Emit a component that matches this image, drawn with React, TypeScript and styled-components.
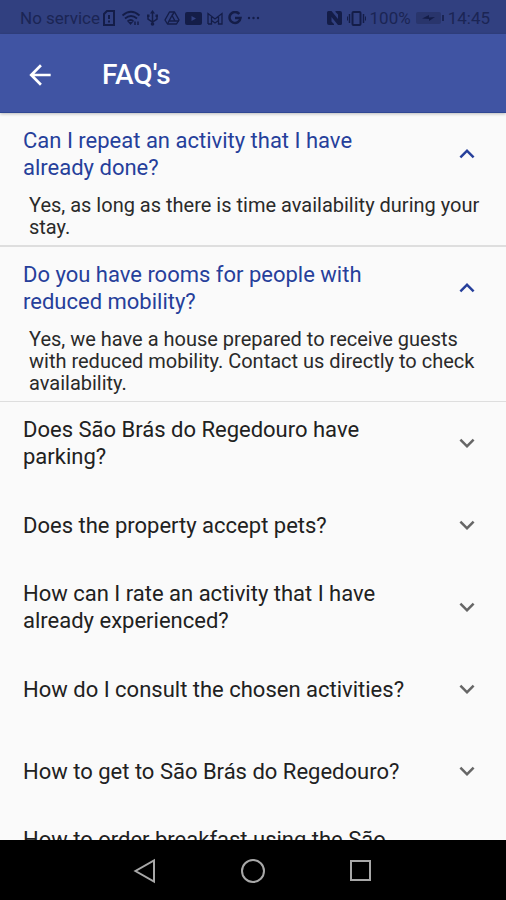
import React, { useState } from "react";
import styled, { createGlobalStyle } from "styled-components";

const GlobalStyle = createGlobalStyle`
  *, *::before, *::after { box-sizing: border-box; }
  body { margin: 0; font-family: Roboto, "Liberation Sans", sans-serif; background: #fafafa; }
  button { font: inherit; border: 0; padding: 0; background: none; cursor: pointer; }
  svg { display: block; flex: none; }
`;

const Screen = styled.div`
  display: flex;
  flex-direction: column;
  height: 100vh;
  overflow: hidden;
`;

const StatusBar = styled.div`
  display: flex;
  flex: none;
  align-items: center;
  justify-content: space-between;
  height: 34px;
  padding: 2px 16px 0 20px;
  background: #314080;
  color: #1b2554;
  font-size: 17px;
  line-height: 20px;

  svg {
    color: #141d48;
  }
`;

const StatusGroup = styled.div<{ $gap: number }>`
  display: flex;
  align-items: center;
  gap: ${({ $gap }) => $gap}px;
`;

const AppBar = styled.header`
  position: relative;
  display: flex;
  flex: none;
  align-items: center;
  gap: 46px;
  height: 79px;
  padding: 3px 24px 0;
  background: #4054a3;
  border-bottom: 1px solid #2f4793;
  box-shadow: 0 1px 3px rgba(0, 0, 0, 0.25);
  color: #fff;
`;

const BackButton = styled.button`
  color: inherit;
`;

const Title = styled.h1`
  margin: 0;
  font-size: 28px;
  font-weight: 500;
  line-height: 32px;
`;

const List = styled.main`
  flex: 1;
  min-height: 0;
  overflow: hidden;
`;

const Item = styled.section<{ $divider: number }>`
  border-bottom: ${({ $divider }) => $divider}px solid #dedede;
`;

const Heading = styled.h2`
  margin: 0;
  font-size: 22px;
  font-weight: 400;
  line-height: 27px;
`;

const Question = styled.button<{ $open: boolean }>`
  display: flex;
  align-items: center;
  justify-content: space-between;
  gap: 32px;
  width: 100%;
  height: ${({ $open }) => ($open ? 81 : 82)}px;
  padding: 0 24px 0 23px;
  text-align: left;
  color: ${({ $open }) => ($open ? "#263f9b" : "#212121")};

  svg {
    color: ${({ $open }) => ($open ? "#263f9b" : "#666")};
    transform: ${({ $open }) => ($open ? "rotate(180deg)" : "none")};
  }
`;

const Answer = styled.p`
  margin: 0;
  padding: 0 24px 7px 29px;
  color: #2a2a2a;
  font-size: 20px;
  line-height: 22px;
`;

const NavBar = styled.nav`
  display: flex;
  flex: none;
  align-items: center;
  justify-content: center;
  gap: 80px;
  height: 60px;
  padding-top: 2px;
  background: #000;
`;

const NavButton = styled.button`
  color: #a8a8a8;
`;

const ArrowBack = () => (
  <svg width="32" height="32" viewBox="0 0 24 24" fill="currentColor" aria-hidden="true">
    <path d="M20 11H7.830l5.590-5.590L12 4l-8 8 8 8 1.410-1.410L7.830 13H20v-2z" />
  </svg>
);

const Chevron = () => (
  <svg width="30" height="30" viewBox="0 0 24 24" fill="currentColor" aria-hidden="true">
    <path d="M16.590 8.590 12 13.170 7.410 8.590 6 10l6 6 6-6z" />
  </svg>
);

const SimAlert = () => (
  <svg width="14" height="18" viewBox="0 0 14 18" fill="none" stroke="currentColor" strokeWidth="2" aria-hidden="true">
    <path d="M5 2h7v14H2V5zM7 6v4M7 11.500v2" />
  </svg>
);

const Wifi = () => (
  <svg width="20" height="18" viewBox="0 0 20 18" fill="none" stroke="currentColor" strokeWidth="1.800" aria-hidden="true">
    <path d="M1.500 6.500Q10-1 18.500 6.500M4 9.500q6-5 12 0M6.500 12.500q3.500-3 6 0" />
    <path d="m7 13 2.500 3 2.500-3z" fill="currentColor" stroke="none" />
    <path d="M14 12.500V16M17 16v-3.500" strokeWidth="1.500" />
  </svg>
);

const Usb = () => (
  <svg width="13" height="18" viewBox="0 0 13 18" fill="none" stroke="currentColor" strokeWidth="1.500" aria-hidden="true">
    <path d="M6.500 3v11M2 7v3l4.500 3L11 10V7" />
    <path d="M6.500 1 9 4.500H4zM1 5.500h2.500V8H1zM9.500 5.500H12V8H9.500z" fill="currentColor" stroke="none" />
    <circle cx="6.500" cy="15" r="1.800" fill="currentColor" stroke="none" />
  </svg>
);

const Drive = () => (
  <svg width="16" height="16" viewBox="0 0 16 16" fill="none" stroke="currentColor" strokeWidth="1.400" strokeLinejoin="round" aria-hidden="true">
    <path d="M5.500 2h5L15 10l-2.500 4h-9L1 10z" />
    <path d="M8 5.500 11 11H5zM8 5.500 10.500 2M5 11l-1.500 3M11 11h4" />
  </svg>
);

const Video = () => (
  <svg width="17" height="13" viewBox="0 0 17 13" aria-hidden="true">
    <rect width="17" height="13" rx="2" fill="currentColor" />
    <path d="M6.500 4v5l4.500-2.500z" fill="#314080" />
  </svg>
);

const Mail = () => (
  <svg width="16" height="13" viewBox="0 0 16 13" fill="none" stroke="currentColor" strokeWidth="1.300" aria-hidden="true">
    <path d="M1 12V1.500L8 7l7-5.500V12h-3.500V5M1 12h3.500V5M4.500 8.500 8 11l3.500-2.500" />
  </svg>
);

const LetterG = () => (
  <svg width="14" height="14" viewBox="0 0 14 14" fill="none" stroke="currentColor" strokeWidth="2.500" aria-hidden="true">
    <path d="M11.300 3A5.500 5.500 0 1 0 12.500 7H7" />
  </svg>
);

const Dots = () => (
  <svg width="13" height="4" viewBox="0 0 13 4" fill="currentColor" aria-hidden="true">
    <circle cx="2" cy="2" r="1.200" />
    <circle cx="6.500" cy="2" r="1.200" />
    <circle cx="11" cy="2" r="1.200" />
  </svg>
);

const Nfc = () => (
  <svg width="16" height="16" viewBox="0 0 16 16" fill="currentColor" aria-hidden="true">
    <path d="M0 2.500Q0 1 1.500 1h3L11 9V4.500L8.500 2V1H13q2 0 2 2v10.500q0 1.500-1.500 1.500h-2.500L4.500 7v4.500L7 14v1H2q-2 0-2-2z" />
  </svg>
);

const Vibrate = () => (
  <svg width="19" height="17" viewBox="0 0 19 17" fill="none" stroke="currentColor" strokeWidth="2" aria-hidden="true">
    <rect x="5.500" y="2" width="8" height="13" rx="1" />
    <path d="M2.500 4v9M16.500 4v9" strokeWidth="1.500" />
    <path d="M.5 6.500v4M18.500 6.500v4" strokeWidth="1" />
  </svg>
);

const Battery = () => (
  <svg width="29" height="14" viewBox="0 0 29 14" aria-hidden="true">
    <rect x="1" y="1" width="25" height="12" rx="2" fill="#29356c" />
    <path d="M7 7.500 14 4v2.500l6-.5-6 4V8z" fill="#141d48" />
    <rect x="27" y="4" width="2" height="6" fill="#1b2554" />
  </svg>
);

type Faq = { question: string; answer: string; open?: boolean; divider?: number };

const faqs: Faq[] = [
  {
    question: "Can I repeat an activity that I have already done?",
    answer: "Yes, as long as there is time availability during your stay.",
    open: true,
    divider: 2,
  },
  {
    question: "Do you have rooms for people with reduced mobility?",
    answer:
      "Yes, we have a house prepared to receive guests with reduced mobility. Contact us directly to check availability.",
    open: true,
    divider: 1,
  },
  { question: "Does São Brás do Regedouro have parking?", answer: "" },
  { question: "Does the property accept pets?", answer: "" },
  { question: "How can I rate an activity that I have already experienced?", answer: "" },
  { question: "How do I consult the chosen activities?", answer: "" },
  { question: "How to get to São Brás do Regedouro?", answer: "" },
  { question: "How to order breakfast using the São Brás do Regedouro app?", answer: "" },
];

const FaqItem = ({ question, answer, open: initial = false, divider = 1 }: Faq) => {
  const [open, setOpen] = useState(initial);
  return (
    <Item $divider={open ? divider : 0}>
      <Heading>
        <Question $open={open} aria-expanded={open} onClick={() => setOpen(!open)}>
          <span>{question}</span>
          <Chevron />
        </Question>
      </Heading>
      {open && <Answer>{answer}</Answer>}
    </Item>
  );
};

export default function App() {
  return (
    <Screen>
      <GlobalStyle />
      <StatusBar>
        <StatusGroup $gap={5}>
          <StatusGroup $gap={2}>
            <span>No service</span>
            <SimAlert />
          </StatusGroup>
          <Wifi />
          <Usb />
          <Drive />
          <Video />
          <Mail />
          <LetterG />
          <Dots />
        </StatusGroup>
        <StatusGroup $gap={4}>
          <Nfc />
          <Vibrate />
          <span>100%</span>
          <Battery />
          <span>14:45</span>
        </StatusGroup>
      </StatusBar>
      <AppBar>
        <BackButton aria-label="Back">
          <ArrowBack />
        </BackButton>
        <Title>FAQ's</Title>
      </AppBar>
      <List>
        {faqs.map((faq) => (
          <FaqItem key={faq.question} {...faq} />
        ))}
      </List>
      <NavBar aria-label="System">
        <NavButton aria-label="Back">
          <svg width="28" height="28" viewBox="0 0 28 28" fill="none" stroke="currentColor" strokeWidth="2">
            <path d="M23 3.500v21L4.500 14z" />
          </svg>
        </NavButton>
        <NavButton aria-label="Home">
          <svg width="28" height="28" viewBox="0 0 28 28" fill="none" stroke="currentColor" strokeWidth="2">
            <circle cx="14" cy="14" r="11" />
          </svg>
        </NavButton>
        <NavButton aria-label="Recent apps">
          <svg width="28" height="28" viewBox="0 0 28 28" fill="none" stroke="currentColor" strokeWidth="2">
            <path d="M4 4h19v19H4z" />
          </svg>
        </NavButton>
      </NavBar>
    </Screen>
  );
}
